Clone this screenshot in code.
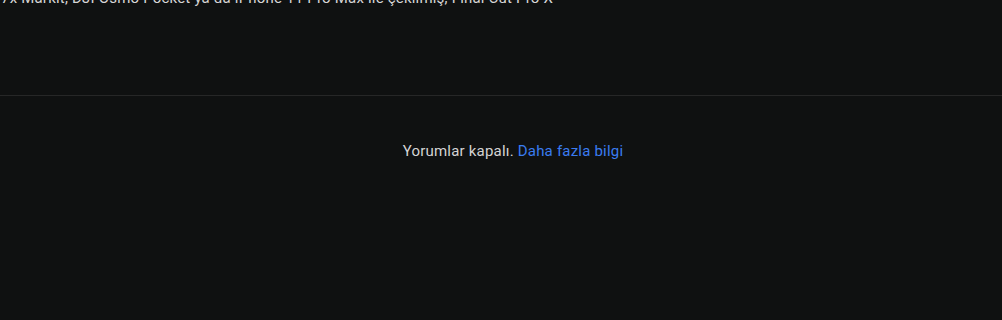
export default function App() {
  return (
    <div className="w-[1002px] h-[320px] overflow-hidden bg-[#0f1111] font-['Roboto',sans-serif] text-[15px] tracking-[0.2px]">
      {/* Description tail */}
      <div className="h-[95px] overflow-hidden">
        <p className="-mt-[12px] pl-[1px] leading-5 text-[#d6d6d6] whitespace-nowrap">
          7x Markit, DJI Osmo Pocket ya da iPhone 11 Pro Max ile çekilmiş, Final Cut Pro X
        </p>
      </div>
      <div className="h-px bg-[#262727]" />
      {/* Comments */}
      <div className="pt-[45px] pl-[24px] text-center leading-5">
        <span className="text-[#d4d4d4]">Yorumlar kapalı. </span>
        <a className="text-[#3a7cf0]">Daha fazla bilgi</a>
      </div>
    </div>
  )
}
